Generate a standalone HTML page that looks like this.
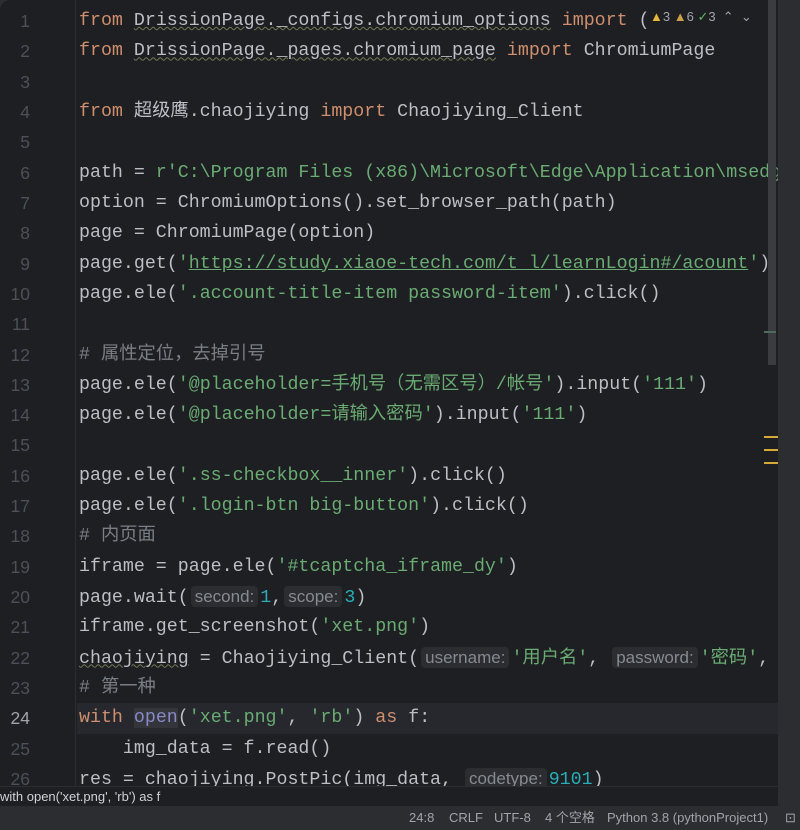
<!DOCTYPE html>
<html><head><meta charset="utf-8"><style>
*{margin:0;padding:0;box-sizing:border-box}
body{width:800px;height:830px;background:#2b2d30;overflow:hidden;position:relative;font-family:"Liberation Mono","Noto Sans CJK SC",monospace}
#ed{position:absolute;left:0;top:0;width:778px;height:786px;background:#1e1f22;overflow:hidden;border-top-left-radius:10px}
.gut{position:absolute;left:0;top:0;width:76px;height:786px;border-right:1px solid #2b2d30}
.ln{position:absolute;left:0;width:30px;text-align:right;color:#4b5059;font-size:17.5px;line-height:30.32px;font-family:"Liberation Sans",sans-serif}
.cl{position:absolute;left:79px;white-space:pre;color:#bcbec4;font-size:18.3px;line-height:30.32px}
.k{color:#cf8e6d}.s{color:#6aab73}.n{color:#2aacb8}.c{color:#7a7e85}.u{text-decoration:underline;text-decoration-color:#6aab73}
.w{text-decoration:underline wavy #6f7a55;text-decoration-thickness:1px}
.h{font-family:"Liberation Sans",sans-serif;font-size:17px;color:#868a91;background:#2b2d30;border-radius:4px;padding:1px 4px;margin:0 2px}
.cur{position:absolute;left:77px;width:701px;height:30.32px;background:#26282e}
#bc{position:absolute;left:0;top:786px;width:778px;height:20px;background:#1e1f22;color:#cfd1d6;font:13px "Liberation Sans",sans-serif;line-height:20px;border-top:1px solid #2b2d30}
#st{position:absolute;left:0;top:806px;width:800px;height:24px;background:#2b2d30;color:#a1a3ab;font:13px "Liberation Sans","Noto Sans CJK SC",sans-serif;line-height:24px}
#st span{position:absolute;top:0}
</style></head><body>
<div id="ed">
<div class="cur" style="top:703.4px"></div>
<div class="gut"></div>
<div id="lines"></div>
<div style="position:absolute;left:768px;top:0;width:8px;height:365px;background:#3a3c40"></div>
<div style="position:absolute;left:764px;top:331px;width:12px;height:2px;background:#4f6b5e"></div>
<div style="position:absolute;left:764px;top:436px;width:14px;height:2px;background:#d6a936"></div>
<div style="position:absolute;left:764px;top:449px;width:14px;height:2px;background:#d6a936"></div>
<div style="position:absolute;left:764px;top:462px;width:14px;height:2px;background:#d6a936"></div>
<div style="position:absolute;left:650px;top:5px;width:116px;height:24px;background:#1e1f22;font:13px 'Liberation Sans',sans-serif;color:#a1a3ab;line-height:24px;white-space:nowrap"><span style="color:#e5b73c">▲</span>3 <span style="color:#c9a24a">▲</span>6 <span style="color:#5fb865">✓</span>3 &nbsp;⌃ &nbsp;⌄</div>
</div>
<div id="bc">with open('xet.png', 'rb') as f</div>
<div id="st"><span style="left:409px">24:8</span><span style="left:449px">CRLF</span><span style="left:494px">UTF-8</span><span style="left:545px">4 个空格</span><span style="left:607px">Python 3.8 (pythonProject1)</span><span style="left:785px">⊡</span></div>
<script>
var L=[
'<span class="k">from</span> <span class="w">DrissionPage._configs.chromium_options</span> <span class="k">import</span> (',
'<span class="k">from</span> <span class="w">DrissionPage._pages.chromium_page</span> <span class="k">import</span> ChromiumPage',
'',
'<span class="k">from</span> 超级鹰.chaojiying <span class="k">import</span> Chaojiying_Client',
'',
'path = <span class="s">r\'C:\\Program Files (x86)\\Microsoft\\Edge\\Application\\msedge.exe\'</span>',
'option = ChromiumOptions().set_browser_path(path)',
'page = ChromiumPage(option)',
'page.get(<span class="s">\'<span class="u">https://study.xiaoe-tech.com/t_l/learnLogin#/acount</span>\'</span>)',
'page.ele(<span class="s">\'.account-title-item password-item\'</span>).click()',
'',
'<span class="c"># 属性定位，去掉引号</span>',
'page.ele(<span class="s">\'@placeholder=手机号（无需区号）/帐号\'</span>).input(<span class="s">\'111\'</span>)',
'page.ele(<span class="s">\'@placeholder=请输入密码\'</span>).input(<span class="s">\'111\'</span>)',
'',
'page.ele(<span class="s">\'.ss-checkbox__inner\'</span>).click()',
'page.ele(<span class="s">\'.login-btn big-button\'</span>).click()',
'<span class="c"># 内页面</span>',
'iframe = page.ele(<span class="s">\'#tcaptcha_iframe_dy\'</span>)',
'page.wait(<span class="h">second:</span><span class="n">1</span>,<span class="h">scope:</span><span class="n">3</span>)',
'iframe.get_screenshot(<span class="s">\'xet.png\'</span>)',
'<span class="w">chaojiying</span> = Chaojiying_Client(<span class="h">username:</span><span class="s">\'用户名\'</span>, <span class="h">password:</span><span class="s">\'密码\'</span>, <span class="h">soft_id:</span>)',
'<span class="c"># 第一种</span>',
'<span class="k">with</span> <span style="color:#8888c6;background:#33353b">open</span>(<span class="s">\'xet.png\'</span>, <span class="s">\'rb\'</span>) <span class="k">as</span> f:',
'    img_data = f.read()',
'res = chaojiying.PostPic(img_data, <span class="h">codetype:</span><span class="n">9101</span>)'
];
var h='';
for(var i=0;i<L.length;i++){var t=6+i*30.32;
h+='<div class="ln" style="top:'+t+'px;'+(i==23?'color:#a1a3ab':'')+'">'+(i+1)+'</div>';
h+='<div class="cl" style="top:'+t+'px">'+L[i]+'</div>';}
document.getElementById('lines').innerHTML=h;
</script>
</body></html>
